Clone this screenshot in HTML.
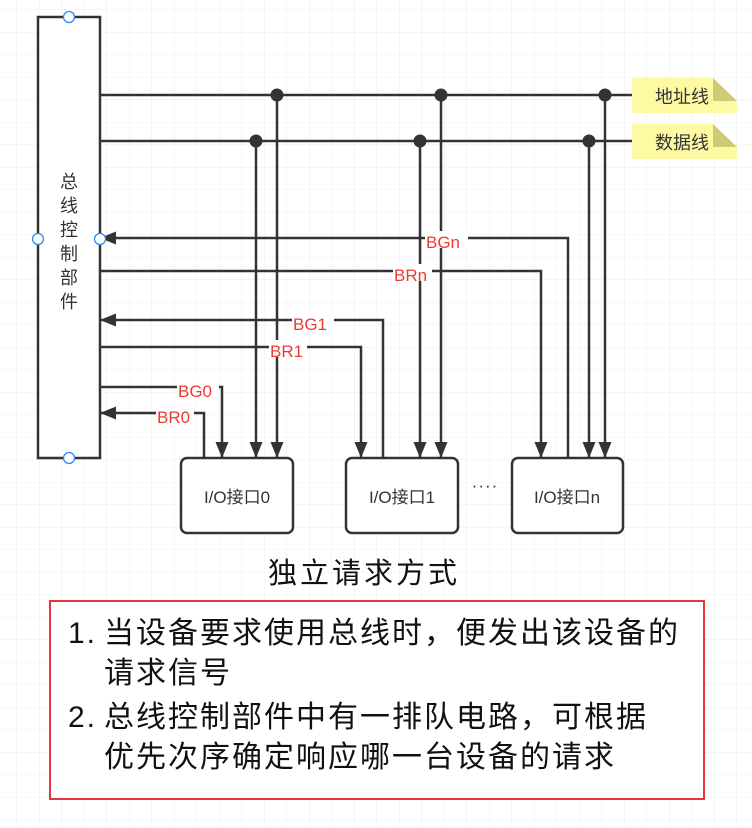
<!DOCTYPE html>
<html><head><meta charset="utf-8"><style>
html,body{margin:0;padding:0;background:#fff;}
body{width:752px;height:828px;overflow:hidden;position:relative;font-family:"Liberation Sans","Noto Sans CJK SC",sans-serif;}
svg{position:absolute;left:0;top:0;}
</style></head><body>
<svg width="752" height="828" viewBox="0 0 752 828" xmlns="http://www.w3.org/2000/svg">
<defs>
<pattern id="g" width="22.5" height="22.5" patternUnits="userSpaceOnUse" x="-5.5" y="-12.5">
<path d="M22.5 0V22.5M0 22.5H22.5" stroke="#ececec" stroke-width="1" fill="none"/>
</pattern>
<marker id="a" markerWidth="16" markerHeight="14" refX="15" refY="7" orient="auto" markerUnits="userSpaceOnUse" viewBox="0 0 16 14">
<path d="M0 0.5L16 7L0 13.5Z" fill="#333"/>
</marker>
</defs>
<rect width="752" height="828" fill="url(#g)"/>
<g stroke="#333" stroke-width="2.5" fill="none">
<rect x="38" y="17" width="62" height="441" fill="#fff"/>
<line x1="100" y1="95" x2="632" y2="95"/>
<line x1="100" y1="141" x2="632" y2="141"/>
<line x1="277" y1="95" x2="277" y2="457" marker-end="url(#a)"/>
<line x1="441" y1="95" x2="441" y2="457" marker-end="url(#a)"/>
<line x1="605" y1="95" x2="605" y2="457" marker-end="url(#a)"/>
<line x1="256" y1="141" x2="256" y2="457" marker-end="url(#a)"/>
<line x1="420" y1="141" x2="420" y2="457" marker-end="url(#a)"/>
<line x1="589" y1="141" x2="589" y2="457" marker-end="url(#a)"/>
<polyline points="568,458 568,238 101,238" marker-end="url(#a)"/>
<polyline points="100,271 541,271 541,457" marker-end="url(#a)"/>
<polyline points="383,458 383,320 101,320" marker-end="url(#a)"/>
<polyline points="100,347 361,347 361,457" marker-end="url(#a)"/>
<polyline points="100,387 222,387 222,457" marker-end="url(#a)"/>
<polyline points="204,458 204,413 101,413" marker-end="url(#a)"/>
<rect x="181" y="458" width="112" height="75" rx="6" fill="#fff"/>
<rect x="346" y="458" width="112" height="75" rx="6" fill="#fff"/>
<rect x="512" y="458" width="111" height="75" rx="6" fill="#fff"/>
</g>
<g fill="#333">
<circle cx="277" cy="95" r="6.5"/><circle cx="441" cy="95" r="6.5"/><circle cx="605" cy="95" r="6.5"/>
<circle cx="256" cy="141" r="6.5"/><circle cx="420" cy="141" r="6.5"/><circle cx="589" cy="141" r="6.5"/>
</g>
<g fill="#fff" stroke="#2a8cf0" stroke-width="1.3">
<circle cx="69" cy="17" r="5.5"/><circle cx="38" cy="239" r="5.5"/><circle cx="100" cy="239" r="5.5"/><circle cx="69" cy="458" r="5.5"/>
</g>
<path d="M632 78H713L737 101V113H632Z" fill="#fdfaa3"/>
<path d="M713 78L737 101H713Z" fill="#cccc77"/>
<path d="M632 124H713L737 147V159H632Z" fill="#fdfaa3"/>
<path d="M713 124L737 147H713Z" fill="#cccc77"/>
<g font-family="'Liberation Sans','Noto Sans CJK SC',sans-serif" font-size="18" fill="#333">
<text x="655" y="103" font-size="18">地址线</text>
<text x="655" y="149" font-size="18">数据线</text>
<g text-anchor="middle" font-size="18">
<text x="69" y="188">总</text><text x="69" y="212">线</text><text x="69" y="236">控</text>
<text x="69" y="260">制</text><text x="69" y="284">部</text><text x="69" y="308">件</text>
</g>
<g text-anchor="middle" font-size="17">
<text x="237" y="503">I/O接口0</text>
<text x="402" y="503">I/O接口1</text>
<text x="567" y="503">I/O接口n</text>
<text x="485" y="491" letter-spacing="1">····</text>
</g>
</g>
<g font-family="'Liberation Sans',sans-serif" font-size="17" fill="#f0392f">
<rect x="425" y="231" width="43" height="17" fill="#fff"/><text x="426" y="248">BGn</text>
<rect x="393" y="264" width="39" height="17" fill="#fff"/><text x="394" y="281">BRn</text>
<rect x="292" y="313" width="42" height="17" fill="#fff"/><text x="293" y="330">BG1</text>
<rect x="269" y="340" width="38" height="17" fill="#fff"/><text x="270" y="357">BR1</text>
<rect x="177" y="380" width="42" height="17" fill="#fff"/><text x="178" y="397">BG0</text>
<rect x="156" y="406" width="38" height="17" fill="#fff"/><text x="157" y="423">BR0</text>
</g>
<text x="268" y="583" font-family="'Liberation Sans','Noto Sans CJK SC',sans-serif" font-size="29" letter-spacing="3" fill="#111">独立请求方式</text>
<rect x="50" y="601" width="654" height="198" fill="#fff" stroke="#e8363c" stroke-width="2"/>
<g font-family="'Liberation Sans','Noto Sans CJK SC',sans-serif" font-size="30" fill="#111" letter-spacing="2">
<text x="68" y="643">1.</text><text x="104" y="643">当设备要求使用总线时，便发出该设备的</text>
<text x="104" y="683">请求信号</text>
<text x="68" y="727">2.</text><text x="104" y="727">总线控制部件中有一排队电路，可根据</text>
<text x="104" y="767">优先次序确定响应哪一台设备的请求</text>
</g>
</svg>
</body></html>
